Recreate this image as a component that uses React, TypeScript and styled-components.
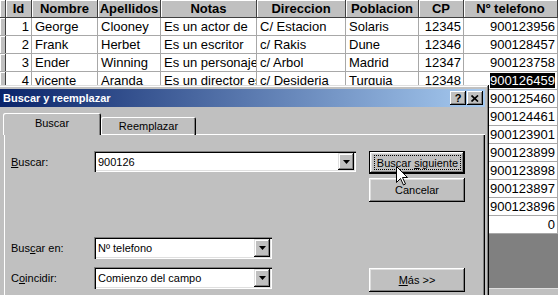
import React from "react"
import styled, { createGlobalStyle } from "styled-components"

const GlobalStyle = createGlobalStyle`
  html, body {
    margin: 0;
    padding: 0;
    overflow: hidden;
    background: #808080;
  }
`

const COLS = "6px 26px 66px 63px 96px 89px 73px 45px 1fr"

type Align = "left" | "right" | "center"

const headers: { label: string; align: Align }[] = [
  { label: "Id", align: "right" },
  { label: "Nombre", align: "left" },
  { label: "Apellidos", align: "left" },
  { label: "Notas", align: "left" },
  { label: "Direccion", align: "left" },
  { label: "Poblacion", align: "left" },
  { label: "CP", align: "right" },
  { label: "Nº telefono", align: "right" },
]

const rows: string[][] = [
  ["1", "George", "Clooney", "Es un actor de", "C/ Estacion", "Solaris", "12345", "900123956"],
  ["2", "Frank", "Herbet", "Es un escritor", "c/ Rakis", "Dune", "12346", "900128457"],
  ["3", "Ender", "Winning", "Es un personaje", "c/ Arbol", "Madrid", "12347", "900123758"],
  ["4", "vicente", "Aranda", "Es un director español", "c/ Desideria", "Turquia", "12348", "900126459"],
  ["", "", "", "", "", "", "", "900125460"],
  ["", "", "", "", "", "", "", "900124461"],
  ["", "", "", "", "", "", "", "900123901"],
  ["", "", "", "", "", "", "", "900123899"],
  ["", "", "", "", "", "", "", "900123898"],
  ["", "", "", "", "", "", "", "900123897"],
  ["", "", "", "", "", "", "", "900123896"],
  ["", "", "", "", "", "", "", "0"],
]

const Screen = styled.div`
  position: relative;
  width: 558px;
  height: 295px;
  overflow: hidden;
  display: flex;
  flex-direction: column;
  background: #808080;
  font-family: "Liberation Sans", Arial, sans-serif;
`

const Row = styled.div<{ $header?: boolean }>`
  display: grid;
  grid-template-columns: ${COLS};
  height: 18px;
  box-sizing: border-box;
  background: ${(p) => (p.$header ? "#c0c0c0" : "#fff")};
  border-bottom: 1px solid ${(p) => (p.$header ? "#404040" : "#a8a8a8")};
  flex-shrink: 0;
`

const Selector = styled.div`
  background: #c0c0c0;
  border-right: 1px solid #404040;
  box-shadow: inset 1px 1px #fff;
`

const HeadCell = styled.div`
  border-right: 1px solid #404040;
  box-shadow: inset 1px 1px #fff;
  font-size: 13px;
  font-weight: bold;
  line-height: 17px;
  text-align: center;
  white-space: nowrap;
  overflow: hidden;
  color: #000;
`

const Cell = styled.div<{ $align: Align }>`
  border-right: 1px solid #a8a8a8;
  padding: 0 2px 0 3px;
  font-size: 13px;
  line-height: 17px;
  white-space: nowrap;
  overflow: hidden;
  text-align: ${(p) => p.$align};
  color: #000;
`

const Selected = styled.span`
  background: #000;
  color: #fff;
`

const Filler = styled.div`
  flex: 1;
  background: #808080;
`

const ScrollBar = styled.div`
  height: 7px;
  flex-shrink: 0;
  background: #c0c0c0;
  box-shadow: inset 0 1px #dfdfdf;
`

/* ---------- dialog ---------- */

const Dialog = styled.div`
  position: absolute;
  left: -4px;
  top: 85px;
  width: 493px;
  height: 240px;
  box-sizing: border-box;
  padding: 4px;
  background: #c0c0c0;
  box-shadow: inset -1px -1px #000, inset 1px 1px #dfdfdf, inset -2px -2px #808080,
    inset 2px 2px #fff;
  display: flex;
  flex-direction: column;
  font-family: "Liberation Sans", Tahoma, sans-serif;
  font-size: 11px;
  color: #000;
`

const TitleBar = styled.div`
  height: 18px;
  display: flex;
  align-items: center;
  padding: 0 2px 0 3px;
  background: linear-gradient(to right, #0a246a, #a6caf0);
  color: #fff;
  font-weight: bold;
  font-size: 11px;
  flex-shrink: 0;
`

const Title = styled.span`
  flex: 1;
`

const CaptionButton = styled.div`
  width: 16px;
  height: 14px;
  box-sizing: border-box;
  background: #c0c0c0;
  box-shadow: inset -1px -1px #000, inset 1px 1px #fff, inset -2px -2px #808080;
  display: flex;
  align-items: center;
  justify-content: center;
  color: #000;
  font-weight: bold;
  font-size: 11px;
  line-height: 1;
  & + & {
    margin-left: 1px;
  }
`

const TabStrip = styled.div`
  display: flex;
  align-items: flex-end;
  height: 22px;
  margin-top: 6px;
  padding-left: 3px;
  position: relative;
  z-index: 1;
  flex-shrink: 0;
`

const Tab = styled.div<{ $active?: boolean }>`
  width: ${(p) => (p.$active ? 98 : 95)}px;
  height: ${(p) => (p.$active ? 22 : 18)}px;
  box-sizing: border-box;
  background: #c0c0c0;
  border-radius: 2px 2px 0 0;
  box-shadow: ${(p) =>
    p.$active
      ? "inset 1px 1px #fff, inset -1px 0 #000, inset -2px 0 #808080"
      : "inset 1px 1px #fff, inset -1px 0 #000, inset -2px 0 #808080, inset 0 -1px #fff"};
  display: flex;
  align-items: center;
  justify-content: center;
  padding-bottom: ${(p) => (p.$active ? 2 : 0)}px;
`

const Panel = styled.div`
  flex: 1;
  margin: -1px 0 0 4px;
  padding: 17px 0 0 7px;
  background: #c0c0c0;
  box-shadow: inset 1px 1px #fff, inset -1px -1px #000, inset -2px -2px #808080;
  display: flex;
`

const FormColumn = styled.div`
  display: flex;
  flex-direction: column;
  width: 345px;
`

const FieldRow = styled.div<{ $gap: number }>`
  display: flex;
  align-items: center;
  margin-top: ${(p) => p.$gap}px;
`

const Label = styled.span`
  width: 83px;
  flex-shrink: 0;
`

const Combo = styled.div<{ $width: number; $height: number }>`
  width: ${(p) => p.$width}px;
  height: ${(p) => p.$height}px;
  box-sizing: border-box;
  padding: 2px 2px 2px 4px;
  background: #fff;
  box-shadow: inset 1px 1px #808080, inset 2px 2px #000, inset -1px -1px #fff,
    inset -2px -2px #dfdfdf;
  display: flex;
  align-items: center;
`

const ComboText = styled.span`
  flex: 1;
  white-space: nowrap;
`

const DropButton = styled.div`
  width: 16px;
  align-self: stretch;
  box-sizing: border-box;
  background: #c0c0c0;
  box-shadow: inset -1px -1px #000, inset 1px 1px #dfdfdf, inset -2px -2px #808080,
    inset 2px 2px #fff;
  display: flex;
  align-items: center;
  justify-content: center;
`

const ButtonColumn = styled.div`
  display: flex;
  flex-direction: column;
  margin-left: 13px;
`

const Button = styled.div<{ $default?: boolean; $gap?: number }>`
  width: 96px;
  height: ${(p) => (p.$default ? 23 : 24)}px;
  box-sizing: border-box;
  margin-top: ${(p) => p.$gap ?? 0}px;
  background: #c0c0c0;
  border: ${(p) => (p.$default ? "1px solid #000" : "none")};
  box-shadow: inset -1px -1px #000, inset 1px 1px #fff, inset -2px -2px #808080,
    inset 2px 2px #dfdfdf;
  display: flex;
  align-items: center;
  justify-content: center;
`

const FocusRing = styled.span`
  flex: 1;
  align-self: stretch;
  margin: 3px 3px 3px 4px;
  border: 1px dotted #000;
  display: flex;
  align-items: center;
  justify-content: center;
`

const Cursor = styled.svg`
  position: absolute;
  left: 396px;
  top: 166px;
`

const Arrow = () => (
  <svg width="7" height="4" viewBox="0 0 7 4">
    <path d="M0 0h7L3.5 4z" fill="#000" />
  </svg>
)

export default function App() {
  return (
    <Screen>
      <GlobalStyle />
      <Row $header>
        <Selector />
        {headers.map((h) => (
          <HeadCell key={h.label}>{h.label}</HeadCell>
        ))}
      </Row>
      {rows.map((r, i) => (
        <Row key={i}>
          <Selector />
          {r.map((v, j) => (
            <Cell key={j} $align={headers[j].align}>
              {i === 3 && j === 7 ? <Selected>{v}</Selected> : v}
            </Cell>
          ))}
        </Row>
      ))}
      <Filler />
      <ScrollBar />

      <Dialog>
        <TitleBar>
          <Title>Buscar y reemplazar</Title>
          <CaptionButton>?</CaptionButton>
          <CaptionButton>
            <svg width="8" height="7" viewBox="0 0 8 7">
              <path d="M0.5 0.5L7 6.5M7 0.5L0.5 6.5" stroke="#000" strokeWidth="1.7" />
            </svg>
          </CaptionButton>
        </TitleBar>
        <TabStrip>
          <Tab $active>Buscar</Tab>
          <Tab>Reemplazar</Tab>
        </TabStrip>
        <Panel>
          <FormColumn>
            <FieldRow $gap={0}>
              <Label>
                <u>B</u>uscar:
              </Label>
              <Combo $width={262} $height={21}>
                <ComboText>900126</ComboText>
                <DropButton>
                  <Arrow />
                </DropButton>
              </Combo>
            </FieldRow>
            <FieldRow $gap={65}>
              <Label>
                Bus<u>c</u>ar en:
              </Label>
              <Combo $width={178} $height={22}>
                <ComboText>Nº telefono</ComboText>
                <DropButton>
                  <Arrow />
                </DropButton>
              </Combo>
            </FieldRow>
            <FieldRow $gap={8}>
              <Label>
                C<u>o</u>incidir:
              </Label>
              <Combo $width={178} $height={22}>
                <ComboText>Comienzo del campo</ComboText>
                <DropButton>
                  <Arrow />
                </DropButton>
              </Combo>
            </FieldRow>
          </FormColumn>
          <ButtonColumn>
            <Button $default>
              <FocusRing>
                Buscar&nbsp;<u>s</u>iguiente
              </FocusRing>
            </Button>
            <Button $gap={4}>Cancelar</Button>
            <Button $gap={66}>
              <span>
                <u>M</u>ás &gt;&gt;
              </span>
            </Button>
          </ButtonColumn>
        </Panel>
      </Dialog>

      <Cursor width="13" height="20" viewBox="0 0 13 20">
        <path
          d="M0.5 0.5V16.5L4.5 12.5L7.5 19L9.5 18L6.5 11.5H11.5Z"
          fill="#fff"
          stroke="#000"
          strokeWidth="1"
          strokeLinejoin="miter"
        />
      </Cursor>
    </Screen>
  )
}
